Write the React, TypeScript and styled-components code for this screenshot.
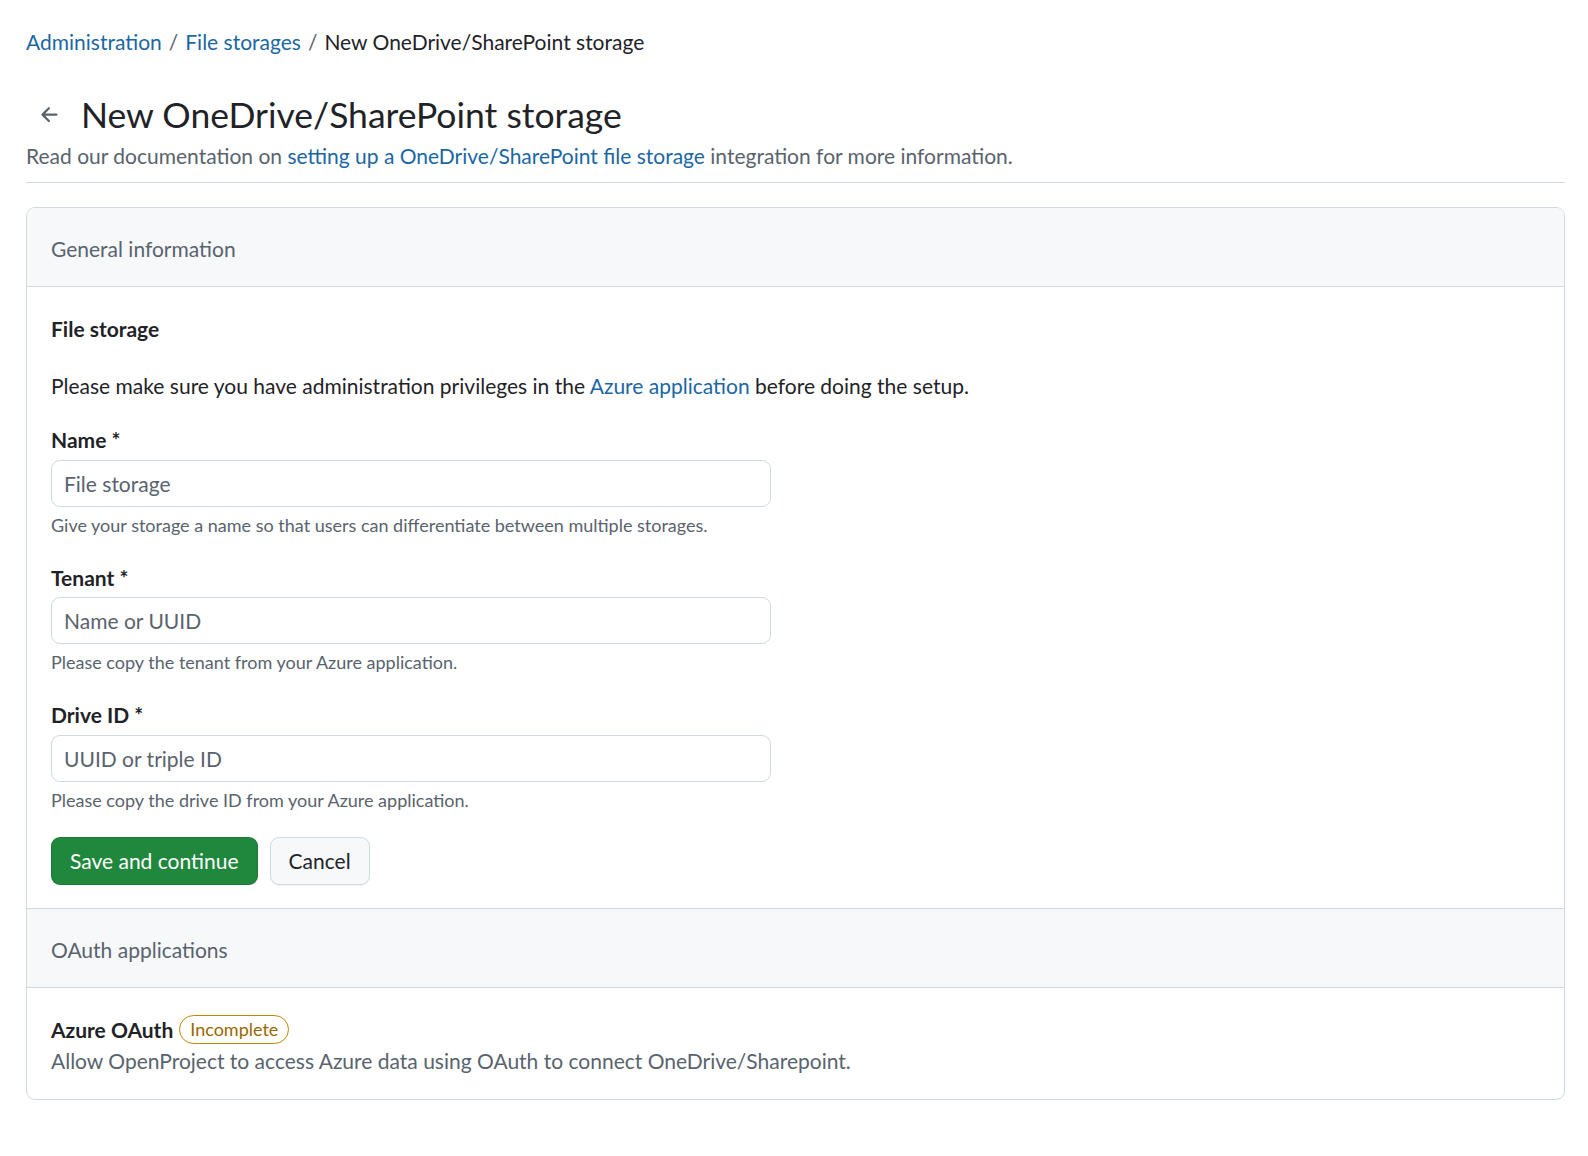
import * as React from 'react'
import styled, { createGlobalStyle } from 'styled-components'

const Color = {
  Fg: '#1f2328',
  Muted: '#59636e',
  Link: '#1a67a3',
  Border: '#d1d9e0',
  Subtle: '#f6f8fa',
  Green: '#1f883d',
  Attention: '#9a6700',
  AttentionBorder: '#bf8700',
}

const GlobalStyle = createGlobalStyle`
  body {
    margin: 0;
    background: #ffffff;
    color: ${Color.Fg};
    font-family: Lato, "Noto Sans", sans-serif;
  }
  * { box-sizing: border-box; }
`

const ArrowLeft = () => (
  <svg width="24" height="24" viewBox="0 0 16 16" fill="currentColor">
    <path d="M7.78 12.53a.75.75 0 0 1-1.06 0L2.47 8.28a.75.75 0 0 1 0-1.06l4.25-4.25a.751.751 0 0 1 1.042.018.751.751 0 0 1 .018 1.042L4.81 7h7.44a.75.75 0 0 1 0 1.5H4.81l2.97 2.97a.75.75 0 0 1 0 1.06Z" />
  </svg>
)

type Field = { label: string; placeholder: string; caption: string }

const fields: Field[] = [
  { label: 'Name', placeholder: 'File storage', caption: 'Give your storage a name so that users can differentiate between multiple storages.' },
  { label: 'Tenant', placeholder: 'Name or UUID', caption: 'Please copy the tenant from your Azure application.' },
  { label: 'Drive ID', placeholder: 'UUID or triple ID', caption: 'Please copy the drive ID from your Azure application.' },
]

const App = () => {
  return (
    <Page>
      <GlobalStyle />
      <Breadcrumb>
        <Crumb href="#">Administration</Crumb>
        <Sep>/</Sep>
        <Crumb href="#">File storages</Crumb>
        <Sep>/</Sep>
        <Current>New OneDrive/SharePoint storage</Current>
      </Breadcrumb>
      <PageHeader>
        <TitleRow>
          <BackButton aria-label="Back">
            <ArrowLeft />
          </BackButton>
          <Title>New OneDrive/SharePoint storage</Title>
        </TitleRow>
        <Description>
          Read our documentation on <Link href="#">setting up a OneDrive/SharePoint file storage</Link> integration for more information.
        </Description>
      </PageHeader>

      <Box>
        <BoxHeader>General information</BoxHeader>
        <BoxBody>
          <Heading>File storage</Heading>
          <Intro>
            Please make sure you have administration privileges in the <Link href="#">Azure application</Link> before doing the setup.
          </Intro>
          {fields.map((f) => (
            <FieldGroup key={f.label}>
              <Label>{f.label} *</Label>
              <Input placeholder={f.placeholder} />
              <Caption>{f.caption}</Caption>
            </FieldGroup>
          ))}
          <Actions>
            <Button primary>Save and continue</Button>
            <Button>Cancel</Button>
          </Actions>
        </BoxBody>
        <BoxHeader divided>OAuth applications</BoxHeader>
        <BoxFooter>
          <AppRow>
            <AppName>Azure OAuth</AppName>
            <Badge>Incomplete</Badge>
          </AppRow>
          <AppText>Allow OpenProject to access Azure data using OAuth to connect OneDrive/Sharepoint.</AppText>
        </BoxFooter>
      </Box>
    </Page>
  )
}

const Page = styled.div`
  padding: 26px 23px 40px 26px;
  font-size: 21px;
  line-height: 1.5;
`
const Breadcrumb = styled.nav`
  display: flex;
  align-items: center;
  gap: 7px;
  height: 31px;
`
const Crumb = styled.a`
  color: ${Color.Link};
  text-decoration: none;
`
const Sep = styled.span`
  color: ${Color.Muted};
`
const Current = styled.span`
  color: ${Color.Fg};
`
const PageHeader = styled.header`
  margin-top: 34px;
  padding-bottom: 10px;
  border-bottom: 1px solid ${Color.Border};
`
const TitleRow = styled.div`
  display: flex;
  align-items: center;
  gap: 7px;
  height: 48px;
`
const BackButton = styled.button`
  width: 48px;
  height: 48px;
  border: 0;
  background: transparent;
  color: ${Color.Muted};
  display: flex;
  align-items: center;
  justify-content: center;
  padding: 0;
  cursor: pointer;
`
const Title = styled.h1`
  margin: 0;
  font-size: 35.5px;
  font-weight: 400;
  line-height: 48px;
  color: ${Color.Fg};
`
const Description = styled.p`
  margin: 1px 0 0;
  color: ${Color.Muted};
`
const Link = styled.a`
  color: ${Color.Link};
  text-decoration: none;
`
const Box = styled.section`
  margin-top: 24px;
  border: 1px solid ${Color.Border};
  border-radius: 9px;
  overflow: hidden;
`
const BoxHeader = styled.div<{ divided?: boolean }>`
  background: ${Color.Subtle};
  color: ${Color.Muted};
  padding: 25px 24px 22px;
  border-bottom: 1px solid ${Color.Border};
  ${(p) => (p.divided ? `border-top: 1px solid ${Color.Border};` : '')}
`
const BoxBody = styled.div`
  padding: 26px 24px 23px;
`
const Heading = styled.h2`
  margin: 0;
  font-size: 21px;
  font-weight: 700;
  line-height: 31.5px;
`
const Intro = styled.p`
  margin: 25px 0 0;
`
const FieldGroup = styled.div`
  margin-top: 23px;
  & + & {
    margin-top: 23px;
  }
`
const Label = styled.label`
  display: block;
  font-weight: 700;
  line-height: 31.5px;
  margin-bottom: 4px;
`
const Input = styled.input`
  display: block;
  width: 720px;
  height: 47px;
  padding: 0 12px;
  border: 1px solid ${Color.Border};
  border-radius: 9px;
  font: inherit;
  color: ${Color.Fg};
  &::placeholder {
    color: ${Color.Muted};
  }
`
const Caption = styled.div`
  margin-top: 5px;
  font-size: 18px;
  line-height: 27px;
  color: ${Color.Muted};
`
const Actions = styled.div`
  display: flex;
  gap: 12px;
  margin-top: 23px;
`
const Button = styled.button<{ primary?: boolean }>`
  height: 48px;
  padding: 0 18px;
  border-radius: 9px;
  font: inherit;
  cursor: pointer;
  border: 1px solid ${(p) => (p.primary ? 'rgba(31, 35, 40, 0.15)' : Color.Border)};
  background: ${(p) => (p.primary ? Color.Green : Color.Subtle)};
  color: ${(p) => (p.primary ? '#ffffff' : Color.Fg)};
  box-shadow: 0 1px 0 rgba(31, 35, 40, 0.04);
`
const BoxFooter = styled.div`
  padding: 26px 24px 22px;
`
const AppRow = styled.div`
  display: flex;
  align-items: center;
  gap: 6px;
  height: 31px;
`
const AppName = styled.span`
  font-weight: 700;
`
const Badge = styled.span`
  display: inline-flex;
  align-items: center;
  height: 29px;
  padding: 0 10px;
  border: 1px solid ${Color.AttentionBorder};
  border-radius: 999px;
  color: ${Color.Attention};
  font-size: 18px;
`
const AppText = styled.p`
  margin: 0;
  color: ${Color.Muted};
`

export default App
